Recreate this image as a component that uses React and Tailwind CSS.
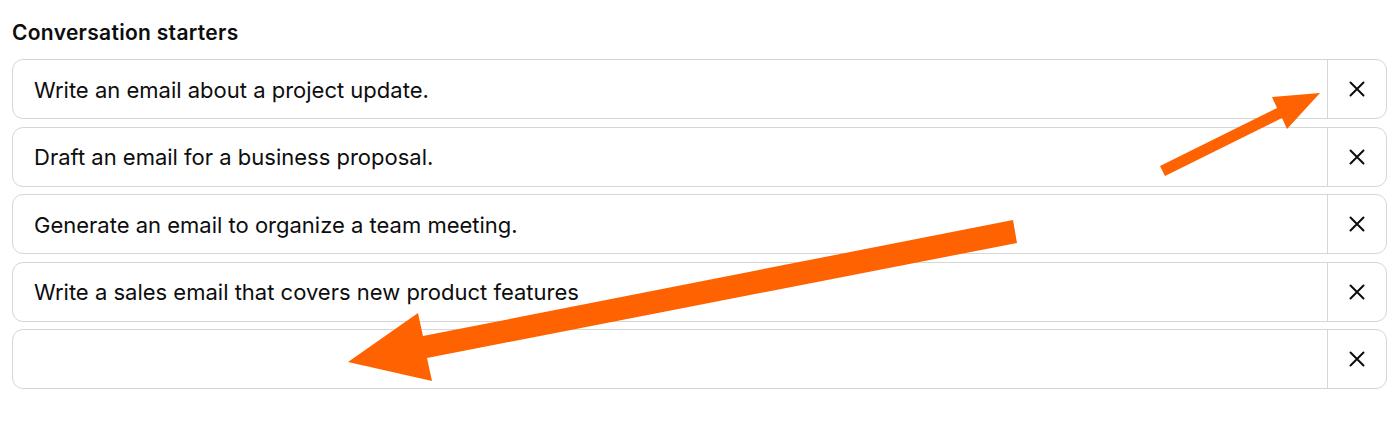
import React from "react";

const starters = [
  "Write an email about a project update.",
  "Draft an email for a business proposal.",
  "Generate an email to organize a team meeting.",
  "Write a sales email that covers new product features",
  "",
];

function XIcon() {
  return (
    <svg width="16" height="16" viewBox="0 0 16 16" fill="none">
      <path d="M1.5 1.5 L14.5 14.5 M14.5 1.5 L1.5 14.5" stroke="#0d0d0d" strokeWidth="2" strokeLinecap="round" />
    </svg>
  );
}

export default function App() {
  return (
    <div className="relative w-[1400px] h-[431px] bg-white" style={{ fontFamily: "Inter, 'Liberation Sans', sans-serif" }}>
      <div className="pl-[12px] pr-[13px] pt-[19px]">
        <div className="text-[21px] leading-[28px] font-semibold text-[#0d0d0d] tracking-[0.3px]">Conversation starters</div>
        <div className="mt-[12px] flex flex-col gap-[7.5px]">
          {starters.map((s, i) => (
            <div key={i} className="flex h-[60px] rounded-[11px] border border-[#d6d6d6] bg-white">
              <div className="flex-1 flex items-center pl-[21px] pt-[2px] text-[22px] text-[#0d0d0d]">{s}</div>
              <div className="w-[59px] border-l border-[#d6d6d6] flex items-center justify-center">
                <XIcon />
              </div>
            </div>
          ))}
        </div>
      </div>
      <svg className="absolute left-0 top-0 pointer-events-none" width="1400" height="431" viewBox="0 0 1400 431">
        <polygon fill="#ff6200" points="1160,166 1277,108 1272,97 1320,93 1287,129 1282,118 1165,176" />
        <polygon fill="#ff6200" points="1013,220 423,336 418,313 348,362 432,381 427,358 1017,243" />
      </svg>
    </div>
  );
}
